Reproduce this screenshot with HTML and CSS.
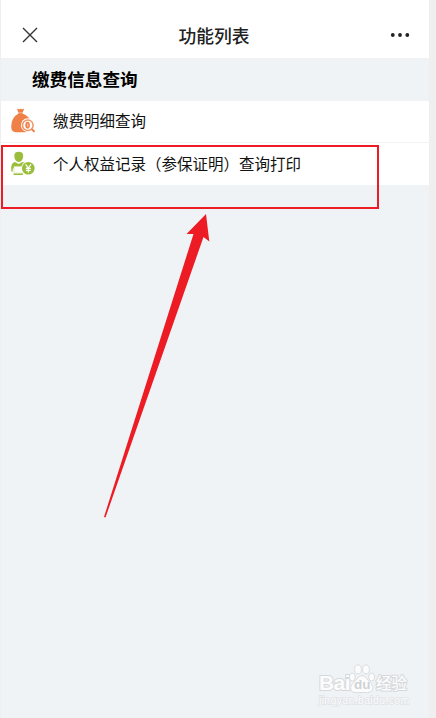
FILE: index.html
```html
<!DOCTYPE html>
<html lang="zh-CN">
<head>
    <meta charset="UTF-8">
    <meta name="viewport" content="width=device-width, initial-scale=1.0">
    <title>功能列表</title>
    <link rel="stylesheet" href="styles.css">
</head>
<body>
    <div class="app">
        <header class="navbar">
            <svg class="icon-close" width="16" height="16" viewBox="0 0 16 16">
                <path d="M1 1L15 15M15 1L1 15"/>
            </svg>
            <h1 class="title">功能列表</h1>
            <svg class="icon-more" width="20" height="6" viewBox="0 0 20 6">
                <circle cx="2.8" cy="3" r="1.9"/>
                <circle cx="10" cy="3" r="1.9"/>
                <circle cx="17.3" cy="3" r="1.9"/>
            </svg>
        </header>

        <h2 class="section-title">缴费信息查询</h2>

        <ul class="menu">
            <li class="menu-item">
                <svg class="menu-icon" width="26" height="26" viewBox="0 0 26 26">
                    <path fill="#ee8048" d="M7 .6Q9 1.8 10.5.8Q12 1.8 14.2.6L12.4 5.6Q19.5 8.5 21 14V22Q19 24.2 15 24.2H6Q1 24.2 1.2 18.5Q1.5 9.5 8.5 5.6Z"/>
                    <path stroke="#f7c4a8" stroke-width=".8" d="M8 4.7H13"/>
                    <circle cx="17.8" cy="17.2" r="6.9" fill="#fff"/>
                    <circle cx="17.8" cy="17.2" r="5.3" fill="none" stroke="#f09566" stroke-width="1.5"/>
                    <ellipse cx="17.6" cy="17.2" rx="2.3" ry="3.4" fill="#ee8048"/>
                    <path stroke="#fbe0d2" stroke-width=".8" d="M17.8 15.5V19"/>
                    <path stroke="#ee8048" stroke-width="2" stroke-linecap="round" d="M22.2 21.7L24 23.2"/>
                </svg>
                <span>缴费明细查询</span>
            </li>
            <li class="menu-item">
                <svg class="menu-icon" width="26" height="26" viewBox="0 0 26 26">
                    <path fill="#9abe3c" d="M4.3 5Q4.3 .8 8.7 .8Q13.2 .8 13.2 5Q13 10.5 8.7 11Q4.5 10.5 4.3 5Z"/>
                    <path fill="#9abe3c" d="M1.2 17.5Q1 11.8 5 11L8.7 13L12.3 11Q15 11.2 16.5 13L13 17Z"/>
                    <path fill="#fff" stroke="#d5e4ae" stroke-width=".7" d="M4 15.5H13.5V22H4Z"/>
                    <path fill="none" stroke="#9abe3c" stroke-width="1.5" d="M2 16.5V20.5M3.5 23.2H13"/>
                    <circle cx="18.3" cy="17.3" r="7" fill="#fff"/>
                    <circle cx="18.3" cy="17.3" r="6.3" fill="#9abe3c"/>
                    <path fill="none" stroke="#fff" stroke-width="1.2" d="M15.6 13.4L18.3 17L21 13.4M18.3 17V21.6M15.8 17.3H20.8M15.8 19.4H20.8"/>
                </svg>
                <span>个人权益记录（参保证明）查询打印</span>
            </li>
        </ul>

        <!-- 标注：红框和箭头 -->
        <div class="mark-box"></div>
        <svg class="mark-arrow" width="112" height="310" viewBox="0 0 112 310">
            <path d="M108 4L111.3 31.5L105.5 27L7.5 307.5L6 307L95.5 24H88.5Z"/>
        </svg>

        <!-- 水印 -->
        <div class="watermark">
            <div class="watermark-logo">
                <span class="watermark-bai">Bai</span>
                <span class="watermark-paw">
                    <svg width="28" height="30" viewBox="0 0 28 30">
                        <ellipse cx="4.3" cy="13" rx="3" ry="4"/>
                        <ellipse cx="10" cy="5.4" rx="3.4" ry="4.4"/>
                        <ellipse cx="18" cy="5.4" rx="3.4" ry="4.4"/>
                        <ellipse cx="23.7" cy="13" rx="3" ry="4"/>
                        <path d="M14 11.5Q17 11.5 19 15L23.5 19.5Q26.5 24 23.5 27.5Q20 29.5 14 28.5Q7 29.5 3.5 27.5Q1 23.5 4.5 19.5L9 15Q11 11.5 14 11.5Z"/>
                    </svg>
                    <span class="watermark-du">du</span>
                </span>
                <span class="watermark-cn">经验</span>
            </div>
            <div class="watermark-url">jingyan.baidu.com</div>
        </div>
    </div>
</body>
</html>
```
FILE: styles.css
```css
* {
    box-sizing: border-box;
}

body {
    margin: 0;
    padding-left: 1px;
    background-color: #efefef;
    font-family: "Noto Sans CJK SC", sans-serif;
    color: #111;
}

.app {
    position: relative;
    width: 428px;
    height: 718px;
    background-color: #eff3f6;
    overflow: hidden;
}

/* 顶部导航 */
.navbar {
    display: flex;
    align-items: center;
    justify-content: space-between;
    height: 58px;
    padding: 12px 19px 0 21px;
    background-color: #fff;
}

.title {
    margin: 0;
    font-size: 17.8px;
    font-weight: 500;
    line-height: 26px;
    color: #222;
}

.icon-close {
    fill: none;
    stroke: #333;
    stroke-width: 1.4;
}

.icon-more {
    fill: #222;
}

.section-title {
    height: 43px;
    margin: 0;
    padding-left: 31px;
    font-size: 17.6px;
    font-weight: 700;
    line-height: 41px;
    color: #000;
}

/* 功能菜单 */
.menu {
    margin: 0;
    padding: 0;
    list-style: none;
    background-color: #fff;
}

.menu-item {
    display: flex;
    align-items: center;
    gap: 17px;
    height: 42px;
    padding: 0 0 1px 9px;
    font-size: 15.5px;
    line-height: 38px;
}

.menu-item:first-child {
    border-bottom: 1px solid #f1f2f4;
}

.menu-item span {
    padding-bottom: 2px;
}

.menu-icon {
    flex: none;
}

/* 标注 */
.mark-box {
    position: absolute;
    top: 145px;
    left: 0;
    width: 378px;
    height: 64px;
    border: 2px solid #ed1c24;
}

.mark-arrow {
    position: absolute;
    top: 210px;
    left: 97px;
    fill: #ed1c24;
}

/* 水印 */
.watermark {
    position: absolute;
    top: 664px;
    left: 318px;
    width: 92px;
    font-family: "Liberation Sans", "Noto Sans CJK SC", sans-serif;
    color: #fcfcfd;
}

.watermark-logo {
    display: flex;
    align-items: flex-end;
    height: 30px;
}

.watermark-bai {
    width: 29px;
    font-size: 21px;
    font-weight: 700;
    line-height: 22px;
    letter-spacing: -0.6px;
    paint-order: stroke;
    -webkit-text-stroke: 2px #d6d9dc;
}

.watermark-paw {
    position: relative;
    width: 28px;
    height: 30px;
}

.watermark-paw svg {
    display: block;
    fill: #fcfcfd;
    stroke: #d6d9dc;
    stroke-width: 0.9;
}

.watermark-du {
    position: absolute;
    top: 14px;
    left: 6px;
    font-size: 13.5px;
    font-weight: 700;
    line-height: 14px;
    color: #d0d3d6;
}

.watermark-cn {
    font-size: 15.5px;
    font-weight: 500;
    line-height: 21px;
    paint-order: stroke;
    -webkit-text-stroke: 2px #d6d9dc;
}

.watermark-url {
    font-size: 10.5px;
    line-height: 13px;
    letter-spacing: 0.35px;
    white-space: nowrap;
    paint-order: stroke;
    -webkit-text-stroke: 1.5px #dfe2e5;
}
```
